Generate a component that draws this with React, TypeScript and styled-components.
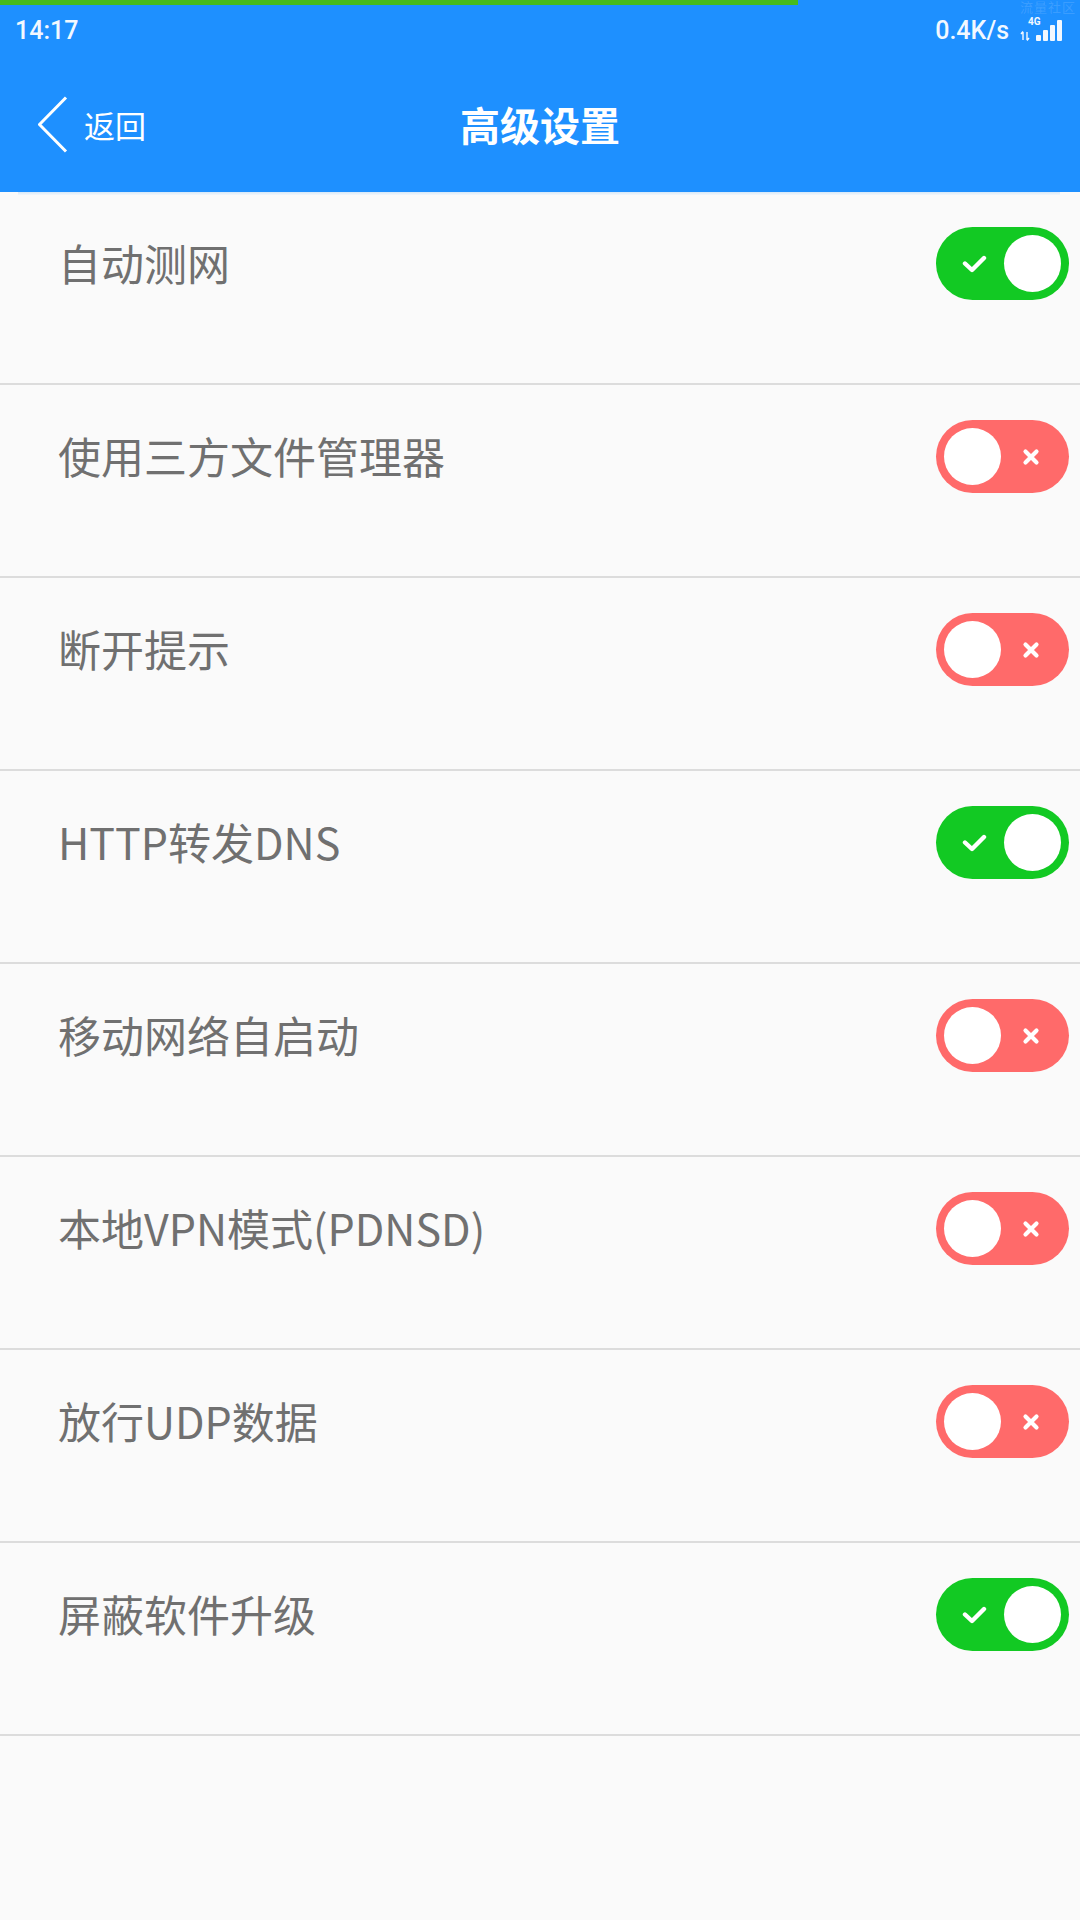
import React from 'react'
import styled, { createGlobalStyle } from 'styled-components'

const GlobalStyle = createGlobalStyle`
  html, body {
    margin: 0;
    padding: 0;
    background: #fafafa;
  }
  * {
    box-sizing: border-box;
  }
`

const Screen = styled.div`
  position: relative;
  width: 1080px;
  min-height: 1920px;
  background: #fafafa;
  font-family: 'Noto Sans CJK SC', 'Noto Sans', sans-serif;
`

const TopBar = styled.header`
  position: relative;
  background: #1e90ff;
  color: #fff;
`

const LoadBar = styled.div`
  position: absolute;
  top: 0;
  left: 0;
  height: 5px;
  background: #46bb1c;
`

const Watermark = styled.span`
  position: absolute;
  top: 0;
  right: 4px;
  font-size: 13px;
  line-height: 14px;
  color: rgba(255, 255, 255, 0.14);
  letter-spacing: 1px;
`

const StatusBar = styled.div`
  height: 60px;
  padding: 0 12px 0 15px;
  display: flex;
  align-items: center;
  justify-content: space-between;
  font-family: Roboto, 'Noto Sans', sans-serif;
  font-size: 25px;
  font-weight: 500;
  color: #f2f8ff;
`

const StatusRight = styled.div`
  display: flex;
  align-items: center;
  gap: 11px;
`

const Signal = styled.div`
  position: relative;
  width: 48px;
  height: 24px;
`

const NetTag = styled.span`
  position: absolute;
  top: -2px;
  left: 8px;
  font-size: 10px;
  font-weight: 700;
  line-height: 11px;
`

const NavBar = styled.nav`
  height: 132px;
  padding: 0 38px 4px 38px;
  display: grid;
  grid-template-columns: 1fr auto 1fr;
  align-items: center;
`

const BackButton = styled.div`
  display: flex;
  align-items: center;
  gap: 16px;
  font-size: 31px;
  color: #fff;
`

const Title = styled.h1`
  margin: 0;
  font-size: 40px;
  font-weight: 700;
`

const HeaderEdge = styled.div`
  height: 3px;
  margin: 0 20px 0 18px;
  background: linear-gradient(#d6e8f8, #f3f7fb);
`

const List = styled.ul`
  list-style: none;
  margin: -3px 0 0;
  padding: 0;
`

const Row = styled.li`
  height: 193px;
  padding: 34px 11px 0 58px;
  display: flex;
  align-items: flex-start;
  justify-content: space-between;
  border-bottom: 2px solid #dcdcdc;
`

const Label = styled.span`
  font-size: 43px;
  font-weight: 400;
  line-height: 73px;
  color: #707070;
`

const Track = styled.div<{ $on: boolean }>`
  width: 133px;
  height: 73px;
  margin-top: 1px;
  padding: 8px;
  border-radius: 37px;
  display: flex;
  flex-direction: ${(p) => (p.$on ? 'row' : 'row-reverse')};
  align-items: center;
  background: ${(p) => (p.$on ? '#12c923' : '#ff6a6a')};
`

const Mark = styled.div`
  width: 60px;
  display: flex;
  justify-content: center;
  align-items: center;
`

const Knob = styled.div`
  width: 57px;
  height: 57px;
  border-radius: 50%;
  background: #fff;
`

const Toggle = ({ on }: { on: boolean }) => (
  <Track $on={on}>
    <Mark>
      {on ? (
        <svg width="25" height="18" viewBox="0 0 25 18">
          <polyline points="3,8.5 10,15 22,3" fill="none" stroke="#fff" strokeWidth="4.4" strokeLinecap="round" strokeLinejoin="round" />
        </svg>
      ) : (
        <svg width="18" height="18" viewBox="0 0 18 18">
          <path d="M3.5 3.5 L14.5 14.5 M14.5 3.5 L3.5 14.5" stroke="#fff" strokeWidth="4.2" strokeLinecap="round" />
        </svg>
      )}
    </Mark>
    <Knob />
  </Track>
)

const settings = [
  { label: '自动测网', on: true },
  { label: '使用三方文件管理器', on: false },
  { label: '断开提示', on: false },
  { label: 'HTTP转发DNS', on: true },
  { label: '移动网络自启动', on: false },
  { label: '本地VPN模式(PDNSD)', on: false },
  { label: '放行UDP数据', on: false },
  { label: '屏蔽软件升级', on: true },
]

export default function App() {
  return (
    <Screen>
      <GlobalStyle />
      <TopBar>
        <LoadBar style={{ width: 798 }} />
        <Watermark>流量社区</Watermark>
        <StatusBar>
          <span>14:17</span>
          <StatusRight>
            <span>0.4K/s</span>
            <Signal>
              <NetTag>4G</NetTag>
              <svg width="48" height="24" viewBox="0 0 48 24">
                <path d="M3 14 L3 22 M1 16 L3 13.5 M7 22 L7 14 M9 20 L7 22.5" stroke="#f2f8ff" strokeWidth="1.4" fill="none" />
                <rect x="16" y="17" width="5" height="6" rx="1" fill="#f2f8ff" />
                <rect x="23" y="12" width="5" height="11" rx="1" fill="#f2f8ff" />
                <rect x="30" y="7" width="5" height="16" rx="1" fill="#f2f8ff" />
                <rect x="37" y="2" width="5" height="21" rx="1" fill="#f2f8ff" />
              </svg>
            </Signal>
          </StatusRight>
        </StatusBar>
        <NavBar>
          <BackButton>
            <svg width="30" height="57" viewBox="0 0 30 57">
              <polyline points="28,1.5 1.5,28.5 28,55.5" fill="none" stroke="#fff" strokeWidth="3" strokeLinejoin="round" />
            </svg>
            <span>返回</span>
          </BackButton>
          <Title>高级设置</Title>
          <span />
        </NavBar>
      </TopBar>
      <HeaderEdge />
      <List>
        {settings.map((s) => (
          <Row key={s.label}>
            <Label>{s.label}</Label>
            <Toggle on={s.on} />
          </Row>
        ))}
      </List>
    </Screen>
  )
}
